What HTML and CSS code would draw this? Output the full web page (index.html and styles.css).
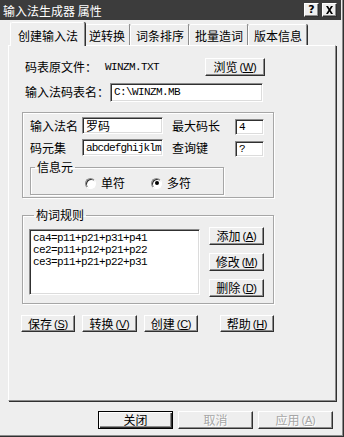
FILE: index.html
```html
<!DOCTYPE html>
<html lang="zh">
<head>
<meta charset="utf-8">
<title>输入法生成器 属性</title>
<link rel="stylesheet" href="styles.css">
</head>
<body>
<div class="dialog">
  <div class="titlebar">
    <span class="title">输入法生成器 属性</span>
    <div class="tb-btns">
      <span class="tb-btn">?</span>
      <span class="tb-btn tb-close">
        <svg width="9" height="8" viewBox="0 0 9 8"><path d="M1 0h2l1.5 2.5L6 0h2L5.5 4 8 8H6L4.5 5.5 3 8H1l2.5-4z" fill="#000"/></svg>
      </span>
    </div>
  </div>

  <div class="tabs">
    <div class="tab active">创建输入法</div>
    <div class="tab">逆转换</div>
    <div class="tab">词条排序</div>
    <div class="tab">批量造词</div>
    <div class="tab">版本信息</div>
  </div>

  <div class="panel">
    <div class="row r1">
      <span class="lbl">码表原文件：</span>
      <span class="mono file">WINZM.TXT</span>
      <button class="btn browse">浏览<span class="acc">(<u>W</u>)</span></button>
    </div>
    <div class="row r2">
      <span class="lbl">输入法码表名：</span>
      <div class="field mono path">C:\WINZM.MB</div>
    </div>

    <div class="group g1">
      <div class="grid">
        <span class="glbl">输入法名</span>
        <div class="field name">罗码</div>
        <span class="glbl">最大码长</span>
        <div class="field small mono shift">4</div>
        <span class="glbl">码元集</span>
        <div class="field name mono tight">abcdefghijklm</div>
        <span class="glbl">查询键</span>
        <div class="field small mono shift">?</div>
      </div>
      <fieldset class="sub">
        <legend>信息元</legend>
        <div class="radios">
          <span class="radio-item"><span class="radio"></span>单符</span>
          <span class="radio-item"><span class="radio checked"></span>多符</span>
        </div>
      </fieldset>
    </div>

    <fieldset class="group g2">
      <legend>构词规则</legend>
      <div class="rules">
        <div class="list mono">
          <div>ca4=p11+p21+p31+p41</div>
          <div>ce2=p11+p12+p21+p22</div>
          <div>ce3=p11+p21+p22+p31</div>
        </div>
        <div class="side-btns">
          <button class="btn side">添加<span class="acc">(<u>A</u>)</span></button>
          <button class="btn side">修改<span class="acc">(<u>M</u>)</span></button>
          <button class="btn side">删除<span class="acc">(<u>D</u>)</span></button>
        </div>
      </div>
    </fieldset>

    <div class="actions">
      <button class="btn act w54">保存<span class="acc">(<u>S</u>)</span></button>
      <button class="btn act w55">转换<span class="acc">(<u>V</u>)</span></button>
      <button class="btn act w54">创建<span class="acc">(<u>C</u>)</span></button>
      <button class="btn act w54 help">帮助<span class="acc">(<u>H</u>)</span></button>
    </div>
  </div>

  <div class="footer">
    <button class="btn foot default">关闭</button>
    <button class="btn foot disabled">取消</button>
    <button class="btn foot disabled">应用<span class="acc">(<u>A</u>)</span></button>
  </div>
</div>
</body>
</html>
```

FILE: styles.css
```css
* { box-sizing: border-box; }

body {
  margin: 0;
  background: #eeeeee;
  font-family: "Noto Sans CJK SC", "Noto Sans", sans-serif;
  font-size: 12px;
  line-height: 12px;
  color: #000;
}

.dialog {
  width: 344px;
  height: 437px;
  background: #eeeeee;
  border-right: 1px solid #303030;
  border-bottom: 1px solid #303030;
  box-shadow: inset -1px -1px 0 #8c8c8c;
  display: flex;
  flex-direction: column;
}

/* title bar */
.titlebar {
  height: 20px;
  margin-right: 2px;
  background: #3c3c3c;
  color: #fff;
  display: flex;
  align-items: center;
  padding: 0 4px 0 3px;
}
.title { flex: 1; font-size: 12px; line-height: 12px; padding-top: 1px; }
.tb-btns { display: flex; gap: 3px; }
.tb-btn {
  width: 15px;
  height: 14px;
  background: #eeeeee;
  border: 1px solid;
  border-color: #fff #303030 #303030 #fff;
  box-shadow: inset -1px -1px 0 #8c8c8c;
  color: #000;
  font: bold 11px/12px "DejaVu Sans", sans-serif;
  display: flex;
  align-items: center;
  justify-content: center;
}

/* tabs */
.tabs {
  display: flex;
  align-items: flex-end;
  height: 25px;
  padding-left: 12px;
}
.tab {
  height: 21px;
  border-top: 1px solid #fff;
  border-left: 1px solid #fff;
  border-right: 1px solid #8c8c8c;
  box-shadow: 1px 0 0 #303030;
  border-radius: 2px 2px 0 0;
  padding: 4px 4px 0 5px;
  white-space: nowrap;
  line-height: 14px;
}
.tab.active {
  height: 24px;
  margin: 0 -2px -1px -2px;
  padding: 6px 6px 0 7px;
  position: relative;
  z-index: 1;
  background: #eeeeee;
}

/* panel */
.panel {
  margin-left: 8px;
  width: 328px;
  height: 356px;
  border-top: 1px solid #fff;
  border-left: 1px solid #fff;
  border-right: 1px solid #8c8c8c;
  border-bottom: 1px solid #8c8c8c;
  box-shadow: 1px 1px 0 #303030;
  padding: 12px 0 0 13px;
}

.row {
  display: flex;
  align-items: center;
  height: 18px;
  width: 252px;
  padding-left: 3px;
}
.lbl { white-space: nowrap; }
.r1 .lbl { width: 72px; }
.file { margin-left: 8px; }
.browse { margin-left: auto; margin-right: 9px; width: 60px; }
.r2 { margin-top: 7px; }
.r2 .lbl { width: 85px; }
.path { width: 153px; height: 19px; padding-left: 4px; }

.mono {
  font-family: "Liberation Mono", monospace;
  font-size: 11px;
  letter-spacing: -0.6px;
}
.tight { letter-spacing: -0.85px; padding-left: 2px; }

.field {
  background: #fff;
  border: 1px solid;
  border-color: #8c8c8c #fff #fff #8c8c8c;
  box-shadow: inset 1px 1px 0 #303030, inset -1px -1px 0 #dcdcdc;
  display: flex;
  align-items: center;
  padding-left: 3px;
  white-space: nowrap;
  overflow: hidden;
}

/* groups */
.group {
  border: 1px solid #a6a6a6;
  box-shadow: 1px 1px 0 #fff, inset 1px 1px 0 #fff;
  width: 252px;
  margin: 0;
}
.g1 {
  margin-top: 11px;
  padding: 4px 0 2px 0;
}
.grid {
  display: grid;
  grid-template-columns: 52px 90px 63px 28px;
  grid-template-rows: 17px 17px;
  row-gap: 5px;
  padding-left: 7px;
  align-items: center;
}
.glbl { white-space: nowrap; }
.name { width: 81px; height: 17px; }
.small { width: 29px; height: 16px; }
.shift { margin-top: 2px; }

fieldset { min-inline-size: 0; }
legend {
  padding: 0 2px;
  line-height: 12px;
  height: 12px;
}

.sub {
  margin: 5px 0 0 7px;
  width: 194px;
  border: 1px solid #a6a6a6;
  box-shadow: 1px 1px 0 #fff, inset 1px 1px 0 #fff;
  padding: 3px 0 4px 0;
}
.sub legend { margin-left: 4px; }
.radios {
  display: flex;
  align-items: center;
  height: 14px;
  padding-left: 54px;
  gap: 26px;
}
.radio-item { display: flex; align-items: center; gap: 5px; }
.radio {
  width: 11px;
  height: 11px;
  border-radius: 50%;
  background: #fff;
  border: 1px solid;
  border-color: #8c8c8c #fff #fff #8c8c8c;
  box-shadow: inset 1px 1px 0 #303030;
  display: flex;
  align-items: center;
  justify-content: center;
}
.radio.checked::after {
  content: "";
  width: 4px;
  height: 4px;
  border-radius: 50%;
  background: #000;
}

.g2 {
  margin-top: 11px;
  padding: 8px 9px 6px 6px;
}
.g2 legend { margin-left: 5px; }
.rules { display: flex; gap: 9px; align-items: flex-start; }
.list {
  width: 171px;
  height: 66px;
  background: #fff;
  border: 1px solid;
  border-color: #8c8c8c #fff #fff #8c8c8c;
  box-shadow: inset 1px 1px 0 #303030, inset -1px -1px 0 #dcdcdc;
  padding: 2px 0 0 3px;
  line-height: 12px;
}
.side-btns {
  display: flex;
  flex-direction: column;
  gap: 8px;
  margin-top: -2px;
}
.side { width: 55px; height: 18px; }

/* buttons */
.btn {
  height: 18px;
  padding: 0;
  background: #eeeeee;
  border: 1px solid;
  border-color: #fff #303030 #303030 #fff;
  box-shadow: inset -1px -1px 0 #8c8c8c;
  font-family: "Noto Sans CJK SC", sans-serif;
  font-size: 12px;
  line-height: 12px;
  color: #000;
  display: flex;
  align-items: center;
  justify-content: center;
  white-space: nowrap;
}
.acc {
  font-family: "Liberation Sans", sans-serif;
  font-size: 11px;
  margin-left: 2px;
  letter-spacing: -0.3px;
}

.actions {
  display: flex;
  gap: 7px;
  margin-top: 11px;
  margin-left: -1px;
}
.act { height: 17px; }
.w54 { width: 54px; }
.w55 { width: 55px; }
.help { margin-left: 15px; }

.footer {
  display: flex;
  gap: 5px;
  margin-top: 10px;
  padding-left: 98px;
}
.foot { width: 75px; height: 18px; }
.default {
  border: 1px solid #000;
  box-shadow: inset 1px 1px 0 #fff, inset -1px -1px 0 #303030, inset -2px -2px 0 #8c8c8c;
}
.disabled {
  color: #a6a6a6;
  text-shadow: 1px 1px 0 #fff;
}
```
